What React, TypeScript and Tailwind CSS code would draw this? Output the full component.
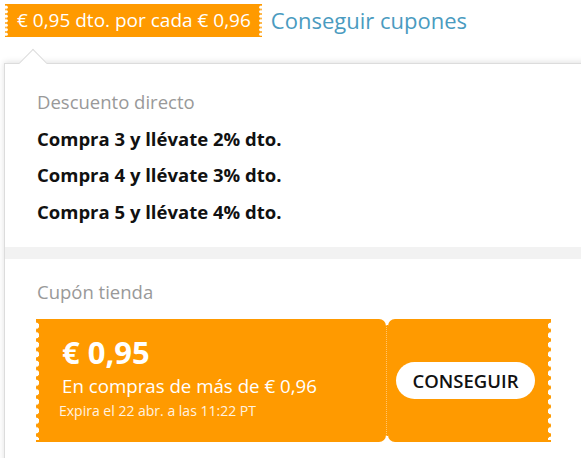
import React from "react";

const tiers = [
  { qty: 3, pct: 2 },
  { qty: 4, pct: 3 },
  { qty: 5, pct: 4 },
];

export default function App() {
  return (
    <div className="relative h-[458px] w-[581px] overflow-hidden bg-white font-['Open_Sans',sans-serif]">
      {/* top row */}
      <div className="flex items-center pl-[5px] pt-[4px]">
        <div className="relative flex h-[33px] items-center bg-[#ff9a00] pl-[12px] pr-[11px] text-[19px] text-white">
          <span className="absolute left-[-1px] top-[1px] bottom-[1px] w-[4px] bg-[radial-gradient(circle,#fff_1.5px,transparent_2px)] bg-[length:4px_4.5px] bg-repeat-y" />
          € 0,95 dto. por cada € 0,96
          <span className="absolute right-[-1px] top-[1px] bottom-[1px] w-[4px] bg-[radial-gradient(circle,#fff_1.5px,transparent_2px)] bg-[length:4px_4.5px] bg-repeat-y" />
        </div>
        <a className="ml-[9px] text-[22px] text-[#4a9bc0]">Conseguir cupones</a>
      </div>

      {/* panel */}
      <div className="relative ml-[4px] mt-[26px] w-[600px] border-l border-t border-[#dcdcdc] bg-white shadow-[0_-1px_6px_rgba(0,0,0,0.12)]">
        <span className="absolute left-[18px] top-[-11px] h-[20px] w-[20px] rotate-45 border-l border-t border-[#dcdcdc] bg-white" />

        <div className="px-[32px] pt-[26px]">
          <div className="text-[18.5px] leading-[24px] text-[#999]">Descuento directo</div>
          {tiers.map((t, i) => (
            <div
              key={t.qty}
              className={`text-[18.5px] font-bold leading-[24px] text-[#111] ${i === 1 ? "mt-[12px]" : "mt-[13px]"}`}
            >
              Compra {t.qty} y llévate {t.pct}% dto.
            </div>
          ))}
        </div>

        <div className="mt-[23px] h-[12px] bg-[#f2f2f2]" />

        <div className="px-[31px] pt-[21px]">
          <div className="pl-[1px] text-[18.5px] leading-[24px] text-[#999]">Cupón tienda</div>

          <div className="mt-[15px] flex h-[123px] w-[515px]">
            <div className="relative flex w-[350px] flex-col rounded-r-[7px] bg-[#ff9a00] pl-[26px] pt-[16px] text-white">
              <span className="absolute left-[-4px] top-[2px] bottom-[2px] w-[8px] bg-[radial-gradient(circle,#fff_3px,transparent_3.5px)] bg-[length:8px_9.5px] bg-repeat-y" />
              <div className="text-[31px] font-bold leading-[34px]">€ 0,95</div>
              <div className="mt-[5px] text-[18.7px] leading-[24px]">En compras de más de € 0,96</div>
              <div className="-ml-[3px] mt-[5px] text-[14px] leading-[16px] text-[#fff3e0]">Expira el 22 abr. a las 11:22 PT</div>
            </div>
            <div className="my-[6px] w-[2px] border-l border-dotted border-[#ffc46b] bg-[#ff9a00]" />
            <div className="relative flex flex-1 items-center rounded-l-[7px] bg-[#ff9a00] pl-[8px]">
              <button className="flex h-[37px] w-[139px] items-center justify-center rounded-full bg-white text-[18.5px] font-semibold text-[#111]">
                CONSEGUIR
              </button>
              <span className="absolute right-[-4px] top-[2px] bottom-[2px] w-[8px] bg-[radial-gradient(circle,#fff_3px,transparent_3.5px)] bg-[length:8px_9.5px] bg-repeat-y" />
            </div>
          </div>
        </div>
        <div className="h-[40px]" />
      </div>
    </div>
  );
}
